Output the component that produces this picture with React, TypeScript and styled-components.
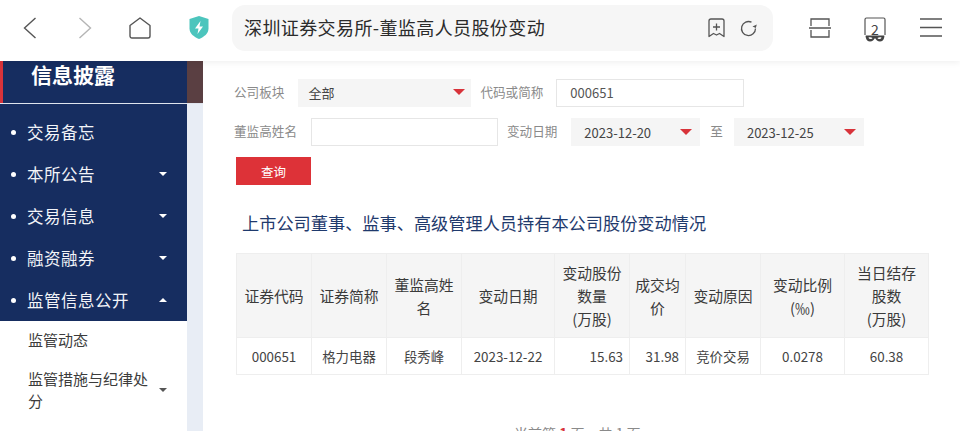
import React from 'react';
import styled, { createGlobalStyle } from 'styled-components';

const GlobalStyle = createGlobalStyle`
  html, body {
    margin: 0;
    height: 431px;
    overflow: hidden;
    background: #fff;
    font-family: "Noto Sans CJK SC", "Noto Sans", sans-serif;
  }
`;

const Page = styled.div`
  width: 960px;
  height: 431px;
  overflow: hidden;
  display: flex;
  flex-direction: column;
`;

/* browser chrome */
const TopBar = styled.header`
  position: relative;
  z-index: 2;
  flex: 0 0 61px;
  height: 61px;
  display: grid;
  grid-template-columns: 232px 541px 187px;
  align-items: center;
  background: #fff;
  box-shadow: 0 2px 6px rgba(0, 0, 0, 0.06);
`;
const IconRow = styled.div`
  height: 56px;
  margin-top: -6px;
  display: flex;
  align-items: center;
`;
const IconSlot = styled.span<{ $left: number }>`
  flex: 0 0 auto;
  display: flex;
  margin-left: ${(p) => p.$left}px;
`;
const AddressBar = styled.div`
  height: 46px;
  margin-top: -5px;
  display: flex;
  align-items: center;
  padding: 0 16px 0 12px;
  background: #f6f6f6;
  border-radius: 13px;
  font-size: 18px;
  letter-spacing: 0.4px;
  color: #2b2b2b;
`;
const AddressText = styled.span`
  flex: 1;
  padding-bottom: 2px;
`;
const TabBox = styled.span`
  position: relative;
  flex: 0 0 auto;
  display: flex;
  margin: 5px 0 0 33px;
`;
const TabCount = styled.span`
  position: absolute;
  left: 0;
  right: 0;
  top: 5px;
  text-align: center;
  color: #444;
  font-size: 14px;
  line-height: 14px;
`;

/* body */
const Body = styled.div`
  flex: 1;
  display: flex;
  min-height: 0;
`;
const Side = styled.aside`
  flex: 0 0 203px;
  display: flex;
  flex-direction: column;
  background: linear-gradient(to right, #fff 187px, #e8edf5 187px);
`;
const SideHead = styled.div`
  height: 42px;
  display: flex;
  background: #5a3f42;
  border-bottom: 1px solid #dfe4ee;
`;
const SideTitle = styled.div`
  box-sizing: border-box;
  width: 187px;
  padding-left: 28px;
  background: #162d60;
  border-left: 3px solid #d8333a;
  color: #fff;
  font-size: 21px;
  font-weight: 700;
  line-height: 27px;
`;
const NavList = styled.nav`
  width: 187px;
  padding-top: 7px;
  background: #162d60;
`;
const NavItem = styled.div`
  height: 42px;
  display: flex;
  align-items: center;
  padding: 0 20px 0 11px;
  color: #f2f4f8;
  font-size: 16.5px;
  letter-spacing: 0.5px;
`;
const Dot = styled.i`
  width: 5px;
  height: 5px;
  margin-right: 11px;
  border-radius: 50%;
  background: #fff;
`;
const NavLabel = styled.span`
  flex: 1;
`;
const Caret = styled.i<{ $up?: boolean; $color?: string; $size?: number }>`
  flex: 0 0 auto;
  width: 0;
  height: 0;
  border-left: ${(p) => p.$size || 4}px solid transparent;
  border-right: ${(p) => p.$size || 4}px solid transparent;
  ${(p) =>
    p.$up
      ? `border-bottom: ${p.$size || 4}px solid ${p.$color || '#fff'};`
      : `border-top: ${p.$size || 4}px solid ${p.$color || '#fff'};`}
`;
const SubList = styled.div`
  width: 187px;
  flex: 1;
  background: #fff;
  padding: 8px 20px 0 28px;
  box-sizing: border-box;
  color: #3c3c3c;
  font-size: 15px;
  line-height: 22px;
`;
const SubItem = styled.div`
  display: flex;
  align-items: center;
  justify-content: space-between;
  margin-bottom: 17px;
`;
const SubLabel = styled.span`
  width: 122px;
`;

/* main column */
const Main = styled.main`
  flex: 1;
  min-width: 0;
  padding: 18px 32px 0 31px;
  background: #fff;
`;
const FormRow = styled.div`
  display: flex;
  align-items: center;
  height: 28px;
  margin-bottom: 11px;
`;
const Label = styled.label<{ $gap: number; $mr: number }>`
  margin-left: ${(p) => p.$gap}px;
  margin-right: ${(p) => p.$mr}px;
  margin-top: -3px;
  color: #8a8a8a;
  font-size: 12.6px;
  white-space: nowrap;
`;
const Select = styled.div<{ $w: number }>`
  width: ${(p) => p.$w}px;
  height: 28px;
  box-sizing: border-box;
  display: flex;
  align-items: center;
  justify-content: space-between;
  padding: 0 6px 2px 10px;
  background: #f5f5f5;
  color: #444;
  font-size: 13px;
`;
const DateSelect = styled(Select)`
  padding: 0 8px 0 13px;
`;
const TextBox = styled.div<{ $w: number }>`
  width: ${(p) => p.$w}px;
  height: 28px;
  box-sizing: border-box;
  display: flex;
  align-items: center;
  padding: 0 0 1px 13px;
  border: 1px solid #e6e6e6;
  color: #555;
  font-size: 13px;
`;
const SearchButton = styled.button`
  display: block;
  width: 75px;
  height: 28px;
  margin-left: 2px;
  padding: 0;
  border: 0;
  background: #dd3238;
  color: #fff;
  font: inherit;
  font-size: 12.5px;
`;
const Title = styled.h2`
  margin: 25px 0 0 8px;
  color: #1f3a6d;
  font-size: 17.2px;
  font-weight: 400;
  line-height: 26px;
  white-space: nowrap;
`;
const Table = styled.table`
  width: 692px;
  margin: 17px 0 0 2px;
  border-collapse: collapse;
  table-layout: fixed;
  color: #444;
  font-size: 14px;
`;
const Th = styled.th`
  height: 83px;
  padding: 0 4px;
  background: #f5f5f5;
  border: 1px solid #eeeeee;
  font-weight: 400;
  font-size: 14.8px;
  line-height: 23px;
  color: #3a3a3a;
`;
const Td = styled.td<{ $right?: boolean }>`
  height: 36px;
  padding: 0 ${(p) => (p.$right ? '6px' : '0')};
  border: 1px solid #eeeeee;
  text-align: ${(p) => (p.$right ? 'right' : 'center')};
  font-size: 13.4px;
`;
const Pager = styled.div`
  margin: 48px 0 0;
  padding-left: 280px;
  color: #8a8a8a;
  font-size: 14px;
`;
const PagerNum = styled.b`
  color: #d8333a;
`;

const BackIcon = ({ color }: { color: string }) => (
  <svg width="14" height="22" viewBox="0 0 14 22" fill="none" stroke={color} strokeWidth="1.4">
    <path d="M12.5 1 1.5 11l11 10" />
  </svg>
);
const ForwardIcon = ({ color }: { color: string }) => (
  <svg width="14" height="22" viewBox="0 0 14 22" fill="none" stroke={color} strokeWidth="1.4">
    <path d="M1.5 1l11 10-11 10" />
  </svg>
);
const HomeIcon = () => (
  <svg width="22" height="22" viewBox="0 0 22 22" fill="none" stroke="#555" strokeWidth="1.4">
    <path d="M1 8.500 11 1l10 7.500V19a2 2 0 0 1-2 2H3a2 2 0 0 1-2-2z" strokeLinejoin="round" />
  </svg>
);
const ShieldIcon = () => (
  <svg width="20" height="23" viewBox="0 0 20 23">
    <path d="M10 0l9.500 3v9.500c0 5-4.500 8.500-9.500 10.500C5 21 .5 17.500.5 12.500V3z" fill="#4cc5bd" />
    <path d="M11.500 5 6 12.500h3.500L8.500 18 14 10.500h-3.500z" fill="#fff" />
  </svg>
);
const BookmarkIcon = () => (
  <svg width="17" height="20" viewBox="0 0 17 20" fill="none" stroke="#555" strokeWidth="1.3">
    <path d="M3 1h11a2 2 0 0 1 2 2v15.500l-4.500-3-3 1.500-3-1.500-4.500 3V3a2 2 0 0 1 2-2z" strokeLinejoin="round" />
    <path d="M8.500 5.500v7M5 9h7" />
  </svg>
);
const ReloadIcon = () => (
  <svg width="17" height="17" viewBox="0 0 17 17" fill="none" stroke="#555" strokeWidth="1.3">
    <path d="M15.500 8.500A7 7 0 1 1 11.500 2.200" />
    <path d="M12.500 6.500l3.300 1.600 1-3.500" fill="#555" stroke="none" />
  </svg>
);
const ScanIcon = () => (
  <svg width="22" height="20" viewBox="0 0 22 20" fill="none" stroke="#555" strokeWidth="1.3">
    <path d="M2 8V1h18v7M2 12v7h18v-7M0 10h22" />
  </svg>
);
const TabsIcon = () => (
  <svg width="22" height="26" viewBox="0 0 22 26" fill="none">
    <path d="M1 18V2.500A1.500 1.500 0 0 1 2.500 1h17A1.500 1.500 0 0 1 21 2.500V18" stroke="#555" strokeWidth="1.2" />
    <path d="M2 18.500h18c.5 0 .5 1 .2 2-.5 2.500-2 4-4.200 4-2.500 0-4-1.500-4.500-3h-1c-.5 1.500-2 3-4.500 3-2.200 0-3.700-1.500-4.200-4-.3-1-.3-2 .2-2z" fill="#444" />
    <path d="M4.500 20.500c1-.5 3-.5 4 .5-.5 1.500-3.500 1.500-4-.5zM17.500 20.500c-1-.5-3-.5-4 .5.500 1.500 3.500 1.500 4-.5z" fill="#fff" />
  </svg>
);
const MenuIcon = () => (
  <svg width="22" height="19" viewBox="0 0 22 19" fill="none" stroke="#555" strokeWidth="1.3">
    <path d="M0 1h22M0 9.500h22M0 18h22" />
  </svg>
);

const columns: string[][] = [
  ['证券代码'],
  ['证券简称'],
  ['董监高姓', '名'],
  ['变动日期'],
  ['变动股份', '数量', '(万股)'],
  ['成交均', '价'],
  ['变动原因'],
  ['变动比例', '(‰)'],
  ['当日结存', '股数', '(万股)'],
];
const widths = [75, 75, 75, 93, 75, 56, 75, 84, 84];
const row: { text: string; right?: boolean }[] = [
  { text: '000651' },
  { text: '格力电器' },
  { text: '段秀峰' },
  { text: '2023-12-22' },
  { text: '15.63', right: true },
  { text: '31.98', right: true },
  { text: '竞价交易' },
  { text: '0.0278' },
  { text: '60.38' },
];
const navItems = ['交易备忘', '本所公告', '交易信息', '融资融券', '监管信息公开'];

const App = () => (
  <Page>
    <GlobalStyle />
    <TopBar>
      <IconRow>
        <IconSlot $left={23}><BackIcon color="#555" /></IconSlot>
        <IconSlot $left={41}><ForwardIcon color="#b5b5b5" /></IconSlot>
        <IconSlot $left={37}><HomeIcon /></IconSlot>
        <IconSlot $left={38}><ShieldIcon /></IconSlot>
      </IconRow>
      <AddressBar>
        <AddressText>深圳证券交易所-董监高人员股份变动</AddressText>
        <IconSlot $left={0}><BookmarkIcon /></IconSlot>
        <IconSlot $left={15}><ReloadIcon /></IconSlot>
      </AddressBar>
      <IconRow>
        <IconSlot $left={36}><ScanIcon /></IconSlot>
        <TabBox>
          <TabsIcon />
          <TabCount>2</TabCount>
        </TabBox>
        <IconSlot $left={34}><MenuIcon /></IconSlot>
      </IconRow>
    </TopBar>
    <Body>
      <Side>
        <SideHead>
          <SideTitle>信息披露</SideTitle>
        </SideHead>
        <NavList>
          {navItems.map((item, i) => (
            <NavItem key={item}>
              <Dot />
              <NavLabel>{item}</NavLabel>
              {i > 0 && <Caret $up={i === navItems.length - 1} />}
            </NavItem>
          ))}
        </NavList>
        <SubList>
          <SubItem>监管动态</SubItem>
          <SubItem>
            <SubLabel>监管措施与纪律处分</SubLabel>
            <Caret $color="#555" />
          </SubItem>
        </SubList>
      </Side>
      <Main>
        <FormRow>
          <Label $gap={0} $mr={14}>公司板块</Label>
          <Select $w={173}>全部<Caret $color="#d8333a" $size={6} /></Select>
          <Label $gap={9} $mr={13}>代码或简称</Label>
          <TextBox $w={188}>000651</TextBox>
        </FormRow>
        <FormRow>
          <Label $gap={0} $mr={14}>董监高姓名</Label>
          <TextBox $w={187} />
          <Label $gap={9} $mr={14}>变动日期</Label>
          <DateSelect $w={129}>2023-12-20<Caret $color="#d8333a" $size={6} /></DateSelect>
          <Label $gap={10} $mr={11}>至</Label>
          <DateSelect $w={130}>2023-12-25<Caret $color="#d8333a" $size={6} /></DateSelect>
        </FormRow>
        <SearchButton type="button">查询</SearchButton>
        <Title>上市公司董事、监事、高级管理人员持有本公司股份变动情况</Title>
        <Table>
          <colgroup>
            {widths.map((w, i) => <col key={i} style={{ width: w }} />)}
          </colgroup>
          <thead>
            <tr>
              {columns.map((lines) => (
                <Th key={lines[0]}>
                  {lines.map((line) => <div key={line}>{line}</div>)}
                </Th>
              ))}
            </tr>
          </thead>
          <tbody>
            <tr>
              {row.map((cell) => <Td key={cell.text} $right={cell.right}>{cell.text}</Td>)}
            </tr>
          </tbody>
        </Table>
        <Pager>当前第 <PagerNum>1</PagerNum> 页，共 1 页</Pager>
      </Main>
    </Body>
  </Page>
);

export default App;
